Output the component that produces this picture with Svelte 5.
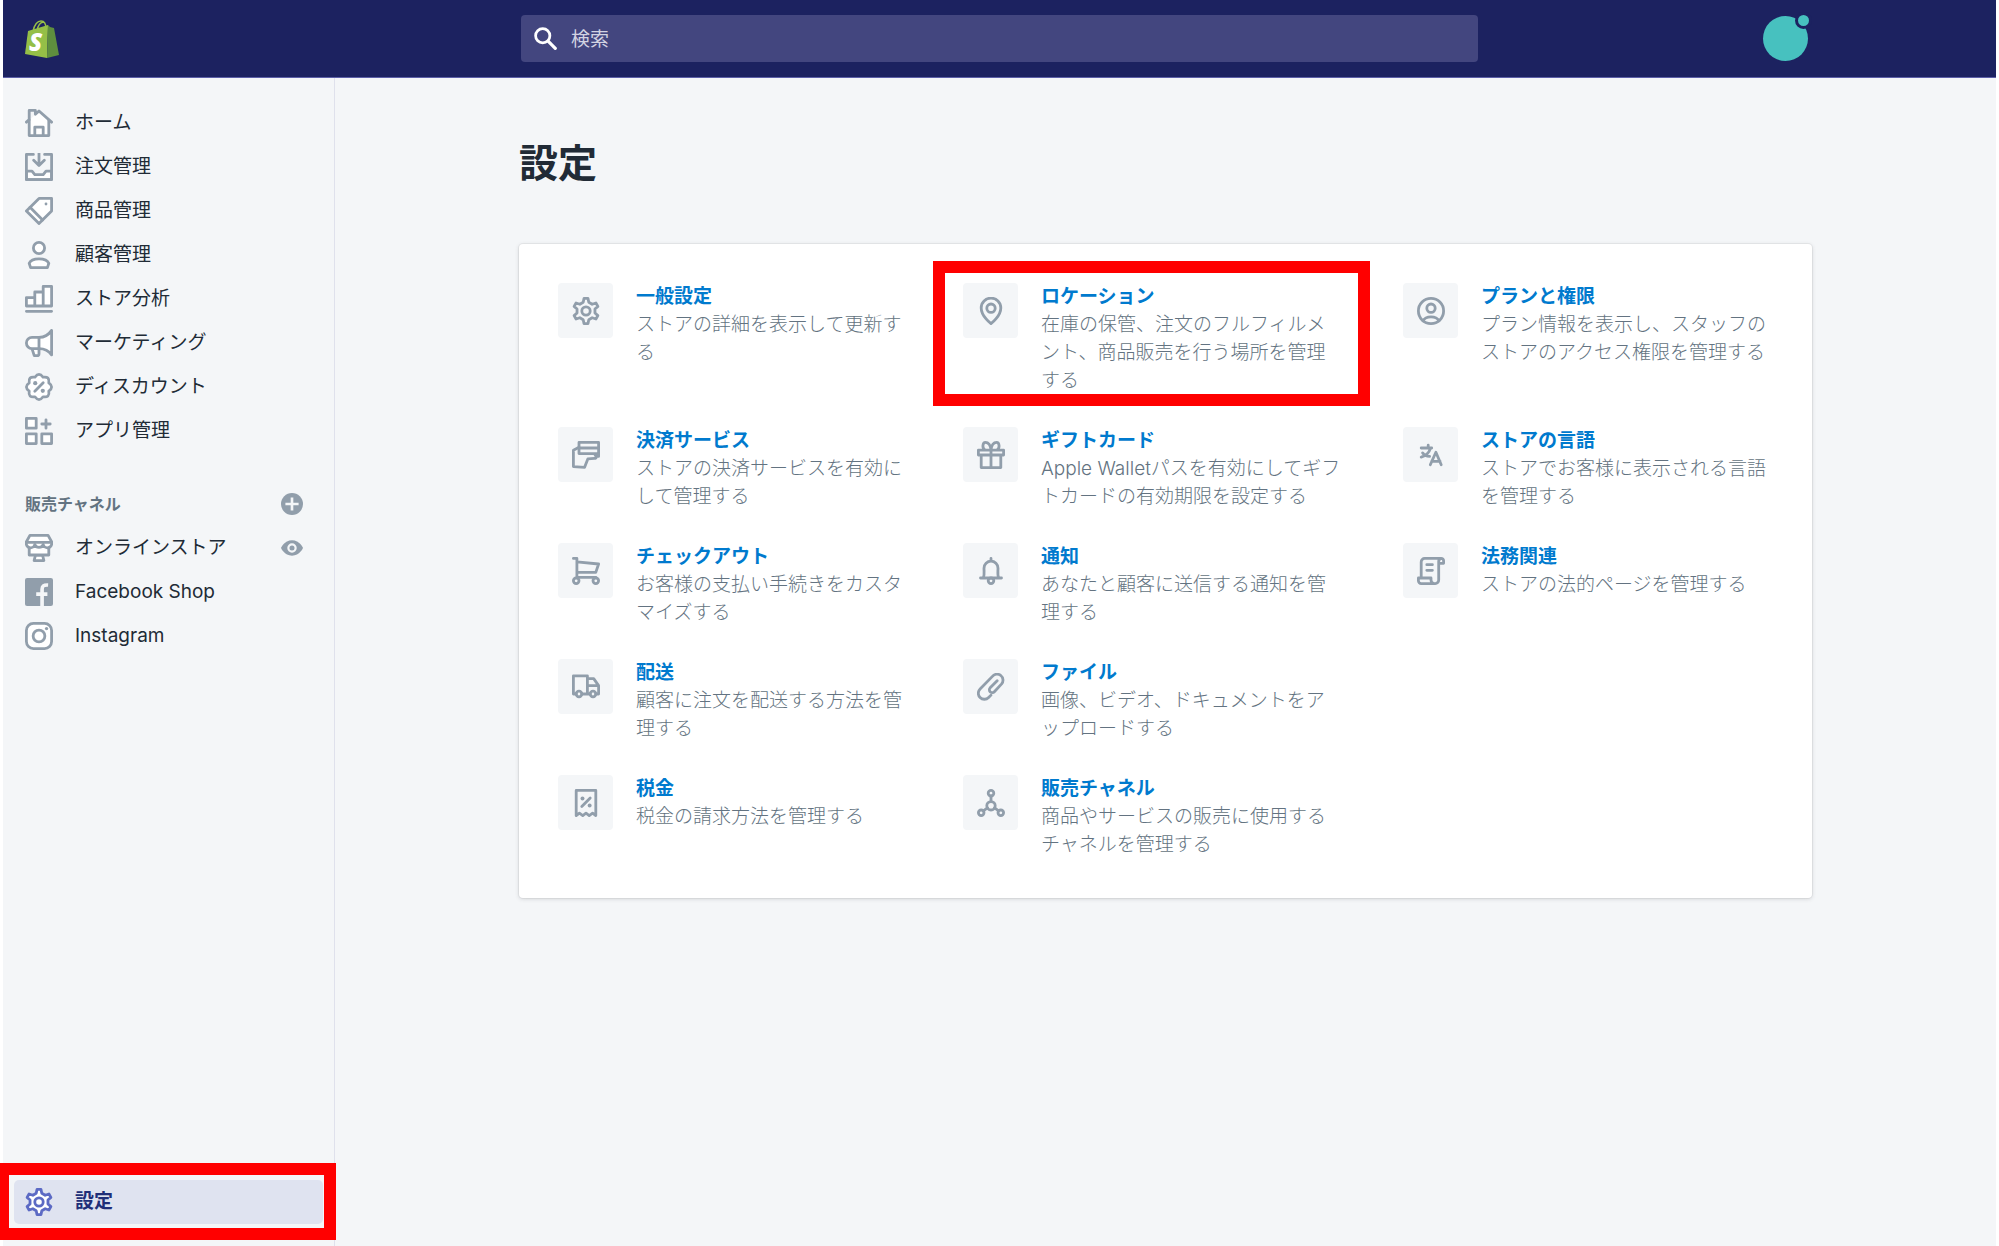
<script>
  const icons = {
    home: `<path d="M3 8.2V19h14V8.2L10 1.5z" stroke="none"/><path d="M7 19v-6h6v6" fill="none"/><path d="M3 8v11h14V8" fill="none"/><path d="M1 9.4l2-1.8V1h4.4v2.8L10 1.4l9 8" fill="none"/>`,
    orders: `<path d="M1 13h4l2 2.5h6l2-2.5h4v6H1z"/><path d="M6 1H1v18h18V1h-5M10 0v8M6.2 5.2L10 9l3.8-3.8" fill="none"/>`,
    products: `<path d="M1 10l9-9h9v9l-9 9z"/><path d="M3.6 7.4l9 9"/><circle cx="15" cy="5" r="1" fill="currentColor" stroke="none"/>`,
    customers: `<circle cx="10" cy="5" r="4"/><path d="M3 16c1-2.400 4-3.200 7-3.200s6 .8 7 3.200l-1 3H4z"/>`,
    analytics: `<path d="M1 15V9h6v6zM7 15V5h6v10zM13 15V1h6v14zM1 18.800h18"/>`,
    marketing: `<path d="M5 14l1.600 5h2c1 0 1.400-.5 1.400-1.400V14z"/><path d="M19 1v17.500c-2-3-5-4.500-9-4.500H5a4 4 0 010-8h5c4 0 7-2 9-5z"/><path d="M10 6v8"/>`,
    discounts: `<path d="M7.100 3Q10-1 12.900 3 17.800 2.200 17 7.100 21 10 17 12.900 17.800 17.800 12.900 17 10 21 7.100 17 2.200 17.800 3 12.900-1 10 3 7.100 2.200 2.200 7.100 3z"/><path d="M7 13l6-6"/><g fill="currentColor" stroke="none"><circle cx="7.300" cy="7.300" r="1.500"/><circle cx="12.700" cy="12.700" r="1.500"/></g>`,
    apps: `<path d="M1 1h7v7H1zM1 12h7v7H1zM12 12h7v7h-7zM15 2v6M12 5h6"/>`,
    store: `<path d="M7.500 15l-1 4h7l-1-4z"/><path d="M3 9v6h14V9"/><path d="M3.500 1h13L19 5.500V6a3 3 0 01-6 1.500 3.200 3.200 0 01-6 0A3 3 0 011 6v-.5z"/><path d="M1 6h18"/>`,
    facebook: `<rect width="20" height="20" rx="1.500" fill="currentColor" stroke="none"/><path d="M12.200 20V8c0-2.200 1-3.200 4.300-3M8 11.500h8" fill="none" stroke="#f4f6f8" stroke-width="2.600" stroke-linecap="butt"/>`,
    instagram: `<rect x="1" y="1" width="18" height="18" rx="5"/><circle cx="10" cy="10" r="4.200"/><circle cx="15.400" cy="4.700" r="1.200" fill="currentColor" stroke="none"/>`,
    settings: `<path d="M8 3.800L8.600 1h2.800l.6 2.800 2.400 1.400 2.700-.9 1.400 2.400-2.100 1.900v2.800l2.100 1.900-1.400 2.400-2.700-.9-2.400 1.400-.6 2.800H8.600L8 16.200l-2.400-1.400-2.700.9-1.400-2.400 2.100-1.900V8.600L1.500 6.700l1.400-2.400 2.700.9z"/><circle cx="10" cy="10" r="3"/>`,
    plus: `<circle cx="10" cy="10" r="10" fill="currentColor" stroke="none"/><path d="M10 4v12M4 10h12" stroke="#f4f6f8" stroke-width="2.400" stroke-linecap="butt"/>`,
    eye: `<path d="M0 10s3-7 10-7 10 7 10 7-3 7-10 7S0 10 0 10z" fill="currentColor" stroke="none"/><circle cx="10" cy="10" r="3.300" fill="currentColor" stroke="#f4f6f8"/>`,
    search: `<circle cx="7.600" cy="7.600" r="6.200" stroke-width="2.400"/><path d="M12.500 12.500l6 6" stroke-width="2.800"/>`,
    payments: `<path d="M5 1h14v8H5z"/><path d="M5 5h14"/><path d="M5 4.500L1 6.600V18.300l8 .5 2.300-6 4.700-.4c1.600 0 1.800-1.900.5-2.400M19 9v2h-2"/>`,
    location: `<path d="M10 19s7-5.200 7-11.200a7 7 0 10-14 0C3 13.800 10 19 10 19z"/><circle cx="10" cy="8" r="3"/>`,
    gift: `<path d="M1 6.500h18V10H1zM3 10v9h14v-9M10 6.500V19M10 6.200C9.600 3 8 1 6 1S3.500 5 5.500 6.200M10 6.200C10.400 3 12 1 14 1s2.500 4 .5 5.200"/>`,
    account: `<circle cx="10" cy="10" r="9"/><circle cx="10" cy="8" r="3"/><path d="M4.300 17c1-1.900 3-2.800 5.700-2.800s4.700.9 5.700 2.800"/>`,
    language: `<path d="M3 5h7.500M8 3v2M9.500 5.500C8.500 9 6.500 10.500 3 11.500M4 8.500c1 1.500 3 2.500 5 2.500M9.500 17l4-9 3.800 9M10.500 14.500h6"/>`,
    cart: `<path d="M1 1h2.500v13.500H17M3.500 3.500L19 5l-2 6H3.500"/><circle cx="3" cy="17" r="2"/><circle cx="17" cy="17" r="2"/>`,
    bell: `<path d="M10 1v1.500M2.500 15h15M4.500 15c1-2 .5-4.500.5-7a5 5 0 0110 0c0 2.500-.5 5 .5 7"/><circle cx="10" cy="17" r="2"/>`,
    legal: `<path d="M3 14V3.500A2.500 2.500 0 015.500 1h11.800A1.700 1.700 0 0119 2.700V4.500h-3M17 1.200c-1 .3-1.500 1-1.500 2V16.500a2.500 2.500 0 01-2.500 2.500H3a2 2 0 01-2-2v-2h9v1.500A2.500 2.500 0 0012.500 19M7 5.500h4M7 9.500h4"/>`,
    truck: `<path d="M3 15H1V2h10v13H7M11 4h4.500L19 9v6h-2M13 15h-2M11.500 9H19"/><circle cx="5" cy="15" r="2"/><circle cx="15" cy="15" r="2"/>`,
    clip: `<path d="M10 15.800l-1.700 1.700a4.300 4.300 0 01-6.100-6.100l8.800-9a4.200 4.200 0 016.600 5.400l-5.200 5.600a2 2 0 01-3-2.800l5-5.100"/>`,
    tax: `<path d="M3 19V1h14v18l-2.300-1.700L12.300 19 10 17.300 7.700 19l-2.400-1.700z"/><path d="M7 12.500l6-6"/><g fill="currentColor" stroke="none"><circle cx="7.500" cy="6.800" r="1.400"/><circle cx="12.600" cy="11.800" r="1.400"/></g>`,
    channels: `<circle cx="10" cy="3" r="2"/><circle cx="10" cy="12" r="3"/><circle cx="3" cy="17" r="2"/><circle cx="17" cy="17" r="2"/><path d="M10 5v4M7.500 13.500l-3 2.200M12.500 13.500l3 2.200"/>`,
  };

  const mainNav = [
    { icon: "home", label: "ホーム" },
    { icon: "orders", label: "注文管理" },
    { icon: "products", label: "商品管理" },
    { icon: "customers", label: "顧客管理" },
    { icon: "analytics", label: "ストア分析" },
    { icon: "marketing", label: "マーケティング" },
    { icon: "discounts", label: "ディスカウント" },
    { icon: "apps", label: "アプリ管理" },
  ];

  const channels = [
    { icon: "store", label: "オンラインストア", view: true },
    { icon: "facebook", label: "Facebook Shop" },
    { icon: "instagram", label: "Instagram" },
  ];

  // listed row by row, null leaves a cell empty
  const settings = [
    { icon: "settings", title: "一般設定", text: "ストアの詳細を表示して更新す\nる" },
    { icon: "location", title: "ロケーション", text: "在庫の保管、注文のフルフィルメ\nント、商品販売を行う場所を管理\nする", marked: true },
    { icon: "account", title: "プランと権限", text: "プラン情報を表示し、スタッフの\nストアのアクセス権限を管理する" },
    { icon: "payments", title: "決済サービス", text: "ストアの決済サービスを有効に\nして管理する" },
    { icon: "gift", title: "ギフトカード", text: "Apple Walletパスを有効にしてギフ\nトカードの有効期限を設定する" },
    { icon: "language", title: "ストアの言語", text: "ストアでお客様に表示される言語\nを管理する" },
    { icon: "cart", title: "チェックアウト", text: "お客様の支払い手続きをカスタ\nマイズする" },
    { icon: "bell", title: "通知", text: "あなたと顧客に送信する通知を管\n理する" },
    { icon: "legal", title: "法務関連", text: "ストアの法的ページを管理する" },
    { icon: "truck", title: "配送", text: "顧客に注文を配送する方法を管\n理する" },
    { icon: "clip", title: "ファイル", text: "画像、ビデオ、ドキュメントをア\nップロードする" },
    null,
    { icon: "tax", title: "税金", text: "税金の請求方法を管理する" },
    { icon: "channels", title: "販売チャネル", text: "商品やサービスの販売に使用する\nチャネルを管理する" },
    null,
  ];
</script>

{#snippet icon(name)}
  <svg class="icon" viewBox="0 0 20 20" aria-hidden="true">{@html icons[name]}</svg>
{/snippet}

<div class="app" lang="ja">
  <header>
    <a class="logo" href="#home" aria-label="Shopify">
      <svg viewBox="0 0 34 38">
        <path d="M8 12C9 4 13 1 16 1s5 3 5 8M12 11c1-6 4-9 7-9" fill="none" stroke="#95bf47" stroke-width="1.5" />
        <path d="M3 11l20-6-1 33L0 34z" fill="#95bf47" />
        <path d="M23 5l2 2 4 1 5 27-12 3z" fill="#5e8e3e" />
        <text x="4" y="31" fill="#fff">S</text>
      </svg>
    </a>
    <div class="topbar">
      <label class="search">
        {@render icon("search")}
        <input type="search" placeholder="検索" aria-label="検索" />
      </label>
      <button class="avatar" aria-label="アカウント"><span class="badge"></span></button>
    </div>
  </header>

  <div class="body">
    <nav>
      <ul>
        {#each mainNav as item}
          <li><a class="item" href="#{item.icon}">{@render icon(item.icon)}{item.label}</a></li>
        {/each}
      </ul>
      <div class="section">
        <h2>販売チャネル</h2>
        <button aria-label="販売チャネルを追加">{@render icon("plus")}</button>
      </div>
      <ul>
        {#each channels as item}
          <li>
            <a class="item" href="#{item.icon}">{@render icon(item.icon)}{item.label}</a>
            {#if item.view}
              <button aria-label="ストアを表示">{@render icon("eye")}</button>
            {/if}
          </li>
        {/each}
      </ul>
      <a class="item active marked" href="#settings">{@render icon("settings")}設定</a>
    </nav>

    <main>
      <h1>設定</h1>
      <div class="card">
        {#each settings as s}
          {#if s}
            <a class="setting" class:marked={s.marked} href="#{s.icon}">
              <span class="tile">{@render icon(s.icon)}</span>
              <span>
                <strong>{s.title}</strong>
                <span class="text">{s.text}</span>
              </span>
            </a>
          {:else}
            <span></span>
          {/if}
        {/each}
      </div>
    </main>
  </div>
</div>

<style>
  :global(body) {
    background: #fff;
    overflow-x: hidden;
  }

  .app {
    display: flex;
    flex-direction: column;
    box-sizing: border-box;
    min-height: 100vh;
    padding: 0 3px;
    font-family: Inter, "Noto Sans CJK JP", sans-serif;
    font-size: 19px;
    line-height: 28px;
    color: #212b36;
  }

  a {
    color: inherit;
    text-decoration: none;
  }

  button {
    display: flex;
    padding: 0;
    border: 0;
    background: none;
    color: #919eab;
  }

  ul {
    margin: 0;
    padding: 0;
    list-style: none;
  }

  .icon {
    flex: none;
    width: 28px;
    height: 28px;
    fill: none;
    stroke: currentColor;
    stroke-width: 2;
    stroke-linecap: round;
    stroke-linejoin: round;
  }

  header {
    display: flex;
    box-sizing: border-box;
    height: 78px;
    background: #1c2260;
    border-bottom: 1px solid #5c5fa8;
  }

  .logo {
    box-sizing: border-box;
    flex: none;
    width: 332px;
    padding: 20px 22px;
  }

  .logo svg {
    display: block;
    width: 34px;
    height: 38px;
  }

  .logo text {
    font: italic 800 24px "Open Sans", sans-serif;
  }

  .topbar {
    display: flex;
    align-items: center;
    justify-content: space-between;
    box-sizing: border-box;
    width: 100%;
    max-width: 1293px;
    margin: 0 auto;
    padding: 0 4px 0 2px;
  }

  .search {
    display: flex;
    align-items: center;
    gap: 14px;
    box-sizing: border-box;
    width: 957px;
    height: 47px;
    padding: 0 13px;
    border-radius: 4px;
    background: #43467f;
    color: #fff;
  }

  .search .icon {
    width: 23px;
    height: 23px;
  }

  .search input {
    flex: 1;
    padding: 2px 0 0;
    border: 0;
    outline: 0;
    background: none;
    font: inherit;
    color: #fff;
  }

  .search input::placeholder {
    color: #d2d3e2;
  }

  .avatar {
    position: relative;
    width: 45px;
    height: 45px;
    border-radius: 50%;
    background: #47c1bf;
  }

  .badge {
    position: absolute;
    top: -4px;
    right: -4px;
    width: 11px;
    height: 11px;
    border: 3px solid #1c2260;
    border-radius: 50%;
    background: #47c1bf;
  }

  .body {
    display: flex;
    flex: 1;
    background: #f4f6f8;
  }

  nav {
    display: flex;
    flex-direction: column;
    flex: none;
    box-sizing: border-box;
    width: 332px;
    padding: 23px 11px 22px;
    border-right: 1px solid #dfe1ec;
  }

  li {
    display: flex;
    align-items: center;
    padding-right: 20px;
  }

  .item {
    display: flex;
    flex: 1;
    align-items: center;
    gap: 22px;
    height: 44px;
    padding: 0 11px;
    border-radius: 5px;
  }

  .item .icon {
    fill: #fff;
    color: #919eab;
  }

  nav button .icon {
    width: 22px;
    height: 22px;
  }

  .section {
    display: flex;
    align-items: center;
    justify-content: space-between;
    margin-top: 29px;
    padding: 8px 20px 8px 11px;
  }

  h2 {
    margin: 0;
    font-size: 16px;
    font-weight: 600;
    color: #637381;
  }

  .item.active {
    flex: none;
    margin-top: auto;
    background: #dfe3f0;
    font-weight: 600;
    color: #202e78;
  }

  .active .icon {
    color: #5c6ac4;
  }

  .marked {
    position: relative;
  }

  .marked::after {
    content: "";
    position: absolute;
    border: 12px solid #f00;
    pointer-events: none;
  }

  .active::after {
    inset: -17px -13px -16px -17px;
  }

  main {
    flex: 1;
    max-width: 1293px;
    margin: 0 auto;
    padding: 57px 0;
  }

  h1 {
    margin: 0 0 53px;
    font-size: 39px;
    font-weight: 600;
    line-height: 56px;
  }

  .card {
    display: grid;
    grid-template-columns: 381fr 416fr 370fr;
    gap: 32px 24px;
    padding: 39px;
    border-radius: 4px;
    background: #fff;
    box-shadow: 0 0 0 1px rgba(63, 63, 68, 0.06), 0 1px 4px rgba(63, 63, 68, 0.18);
  }

  .setting {
    display: flex;
    gap: 23px;
  }

  .setting::after {
    inset: -22px 9px -11px -30px;
  }

  .tile {
    display: flex;
    flex: none;
    align-items: center;
    justify-content: center;
    width: 55px;
    height: 55px;
    border-radius: 4px;
    background: #f4f6f8;
    color: #919eab;
  }

  strong {
    display: block;
    font-weight: 600;
    color: #007ace;
  }

  .text {
    font-weight: 300;
    color: #637381;
    white-space: pre-line;
  }
</style>
